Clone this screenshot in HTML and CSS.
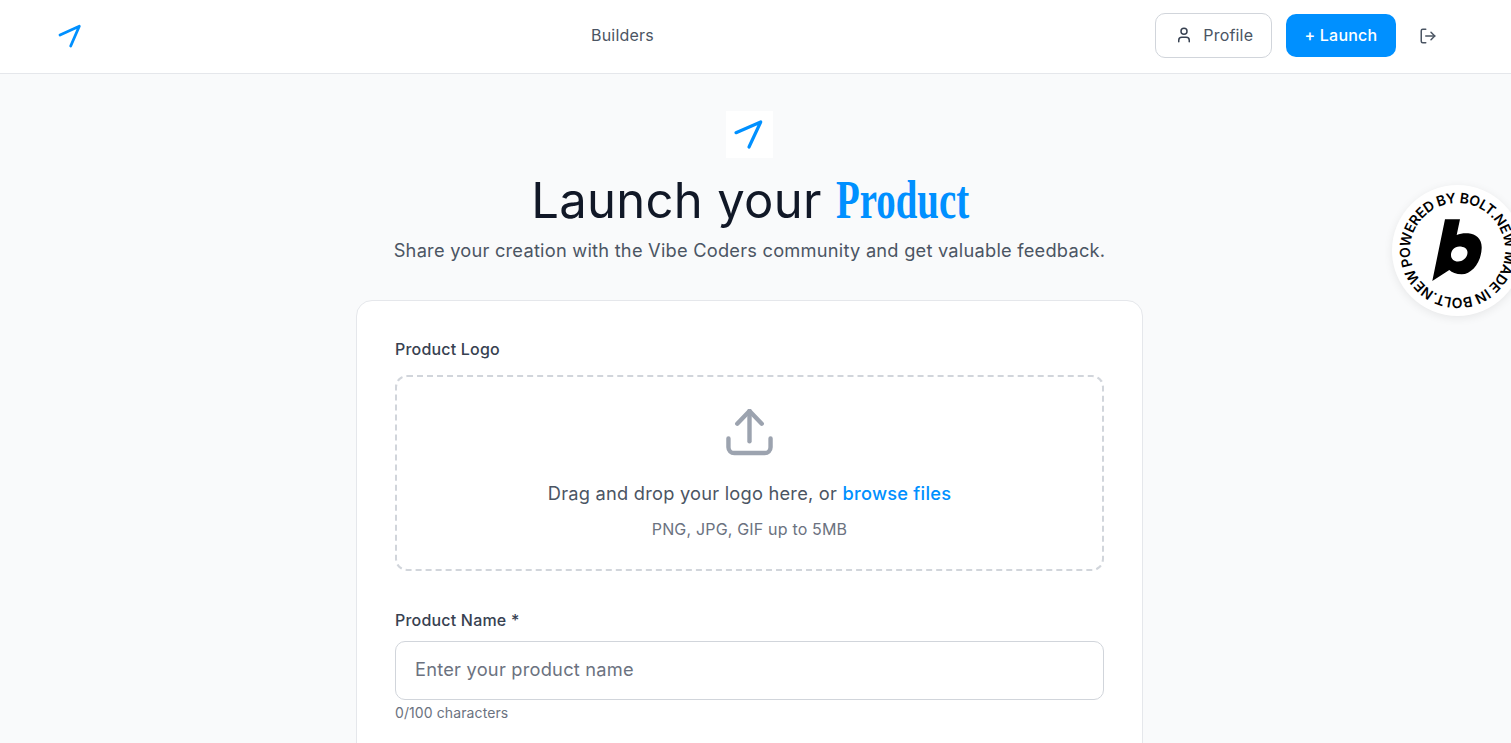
FILE: index.html
```html
<!DOCTYPE html>
<html lang="en">
<head>
<meta charset="utf-8">
<title>Launch your Product</title>
<link rel="stylesheet" href="styles.css">
</head>
<body>
<div class="page">
  <header class="nav">
    <a class="nav-logo" href="#" aria-label="Home">
      <svg width="24" height="24" viewBox="0 0 24 24" fill="none"><path d="M2 11 21.300 2.300 12.700 22" stroke="#0090ff" stroke-width="2.800" stroke-linecap="round" stroke-linejoin="round"/></svg>
    </a>
    <nav class="nav-links"><a href="#">Builders</a></nav>
    <div class="nav-actions">
      <a class="btn-profile" href="#">
        <svg width="18" height="18" viewBox="0 0 24 24" fill="none" stroke="#374151" stroke-width="2" stroke-linecap="round" stroke-linejoin="round"><path d="M19 21v-2a4 4 0 0 0-4-4H9a4 4 0 0 0-4 4v2"/><circle cx="12" cy="7" r="4"/></svg>
        <span>Profile</span>
      </a>
      <a class="btn-launch" href="#">+ Launch</a>
      <button class="btn-logout" aria-label="Log out">
        <svg width="18" height="18" viewBox="0 0 24 24" fill="none" stroke="#4b5563" stroke-width="2" stroke-linecap="round" stroke-linejoin="round"><path d="M9 21H5a2 2 0 0 1-2-2V5a2 2 0 0 1 2-2h4"/><path d="m16 17 5-5-5-5"/><path d="M21 12H9"/></svg>
      </button>
    </div>
  </header>

  <main class="main">
    <div class="hero-logo">
      <svg width="47" height="47" viewBox="0 0 47 47" fill="none"><path d="M10 21.700 34.700 11 23 36" stroke="#0090ff" stroke-width="3.200" stroke-linecap="round" stroke-linejoin="round"/></svg>
    </div>
    <h1 class="title">Launch your <span class="accent">Product</span></h1>
    <p class="subtitle">Share your creation with the Vibe Coders community and get valuable feedback.</p>

    <form class="card">
      <div class="field">
        <label class="label">Product Logo</label>
        <div class="drop">
          <svg class="drop-icon" width="47" height="47" viewBox="0 0 48 48" fill="none" stroke="#9ca3af" stroke-width="4.500" stroke-linecap="round" stroke-linejoin="round"><path d="M2.500 30v9a6 6 0 0 0 6 6h31a6 6 0 0 0 6-6v-9"/><path d="M11.500 15 24 2l12.500 13"/><path d="M24 2v31"/></svg>
          <p class="drop-text">Drag and drop your logo here, or <span class="link">browse files</span></p>
          <p class="drop-hint">PNG, JPG, GIF up to 5MB</p>
        </div>
      </div>
      <div class="field">
        <label class="label label-tight" for="name">Product Name *</label>
        <input class="input" id="name" type="text" placeholder="Enter your product name">
        <p class="count">0/100 characters</p>
      </div>
    </form>
  </main>
</div>

<a class="badge" href="#" aria-label="Made in Bolt.new">
  <svg width="131" height="131" viewBox="0 0 131 131">
    <defs><path id="ring" d="M20.600 81A47.500 47.500 0 1 1 110.400 50A47.500 47.500 0 1 1 20.600 81"/></defs>
    <text class="badge-text"><textPath href="#ring" textLength="296" lengthAdjust="spacing">POWERED BY BOLT.NEW MADE IN BOLT.NEW</textPath></text>
    <path fill-rule="evenodd" d="M53 34.300H68L64.700 50C68 48.500 72 48 76.300 48.300C84 49 90 54 89.700 63C89.300 77 80 89.300 69.700 89.300C64 89.300 60 87.500 57.300 85L40.300 96ZM67.300 61.500C62.500 61.500 59 65.500 59 70C59 74 62 76.500 66 76.500C71 76.500 75.500 72.500 75.500 67.500C75.500 63.500 72 61.500 67.300 61.500Z" fill="#000"/>
  </svg>
</a>
</body>
</html>
```
FILE: styles.css
```css
* { box-sizing: border-box; }
html, body { margin: 0; height: 100%; overflow: hidden; }
body {
  background: #f9fafb;
  font-family: "Inter", "Liberation Sans", sans-serif;
  color: #111827;
}
a { text-decoration: none; color: inherit; }
p { margin: 0; }

.page { width: 1499px; }

.nav {
  width: 1511px;
  height: 74px;
  background: #fff;
  border-bottom: 1px solid #e5e7eb;
  display: flex;
  align-items: center;
  padding: 0 74px 2px 58px;
}
.nav-logo { display: flex; width: 24px; height: 24px; }
.nav-links { margin-left: 509px; padding-bottom: 2px; font-size: 16px; letter-spacing: .0125em; color: #4b5563; }
.nav-actions { margin-left: auto; display: flex; align-items: center; }
.btn-profile {
  display: flex;
  align-items: center;
  gap: 10px;
  height: 45px;
  padding: 0 17.600px 2px 19px;
  border: 1px solid #d1d5db;
  border-radius: 10px;
  font-size: 16px;
  letter-spacing: .0125em;
  color: #4b5563;
}
.btn-launch {
  margin-left: 14px;
  height: 43px;
  padding: 0 18.700px 1px;
  display: flex;
  align-items: center;
  border-radius: 10px;
  background: #0090ff;
  color: #fff;
  font-size: 16px;
  letter-spacing: .0125em;
  font-weight: 500;
}
.btn-logout {
  margin-left: 23px;
  padding: 0;
  border: 0;
  background: none;
  display: flex;
}

.main {
  display: flex;
  flex-direction: column;
  align-items: center;
  padding-top: 37px;
}
.hero-logo {
  width: 47px;
  height: 47px;
  background: #fff;
  display: flex;
  align-items: center;
  justify-content: center;
}
.title {
  margin: 10px 0 0;
  font-size: 49px;
  line-height: 64px;
  font-weight: 400;
  letter-spacing: .006em;
  color: #111827;
}
.accent {
  display: inline-block;
  width: 132px;
  font-family: "Liberation Serif", serif;
  font-weight: 700;
  font-size: 54px;
  letter-spacing: 0;
  color: #0090ff;
  transform: scaleX(.72);
  transform-origin: left center;
  white-space: nowrap;
}
.subtitle {
  margin-top: 3px;
  font-size: 18.250px;
  line-height: 28px;
  letter-spacing: .0125em;
  color: #4b5563;
}

.card {
  margin-top: 36px;
  width: 787px;
  height: 700px;
  padding: 36px 38px;
  background: #fff;
  border: 1px solid #e5e7eb;
  border-radius: 16px;
}
.field { margin-bottom: 37px; }
.label {
  display: block;
  font-size: 16px;
  line-height: 24px;
  font-weight: 500;
  letter-spacing: .0125em;
  color: #374151;
  margin-bottom: 14px;
}
.label-tight { margin-bottom: 9px; }
.drop {
  height: 196px;
  border: 2px dashed #d1d5db;
  border-radius: 12px;
  display: flex;
  flex-direction: column;
  align-items: center;
  padding-top: 32px;
}
.drop-icon { display: block; }
.drop-text {
  margin-top: 23px;
  font-size: 18.250px;
  line-height: 28px;
  letter-spacing: .0125em;
  color: #4b5563;
}
.link { color: #0090ff; font-weight: 500; }
.drop-hint {
  margin-top: 10px;
  font-size: 16px;
  line-height: 24px;
  letter-spacing: .0110em;
  color: #6b7280;
}
.input {
  display: block;
  width: 100%;
  height: 59px;
  padding: 0 19px 4px;
  border: 1px solid #d1d5db;
  border-radius: 10px;
  background: #fff;
  font: 18.250px "Inter", "Liberation Sans", sans-serif;
  letter-spacing: .0125em;
  color: #111827;
}
.input::placeholder { color: #6b7280; opacity: 1; }
.count {
  margin-top: 3px;
  font-size: 14px;
  line-height: 20px;
  letter-spacing: .1px;
  color: #6b7280;
}

.badge {
  position: absolute;
  left: 1392px;
  top: 185px;
  width: 131px;
  height: 131px;
  border-radius: 50%;
  background: #fff;
  box-shadow: 0 2px 10px rgba(0,0,0,.08);
  display: block;
}
.badge svg { display: block; }
.badge-text {
  font-family: "Inter", "Liberation Sans", sans-serif;
  font-size: 14px;
  font-weight: 600;
  fill: #000;
}
```
